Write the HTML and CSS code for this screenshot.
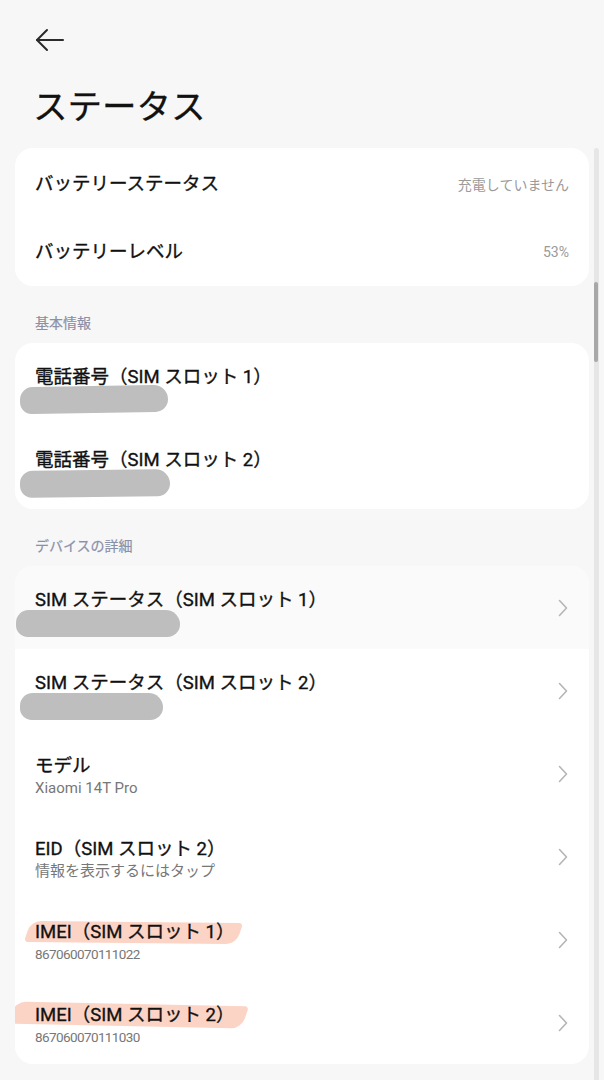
FILE: index.html
```html
<!DOCTYPE html>
<html lang="ja">
<head>
<meta charset="utf-8">
<title>ステータス</title>
<link rel="stylesheet" href="styles.css">
</head>
<body>
<div class="screen">
  <header class="header">
    <div class="back">
      <svg width="30" height="28" viewBox="0 0 30 28" fill="none" stroke="#2b2b2b" stroke-width="2" stroke-linecap="round" stroke-linejoin="round">
        <path d="M2 14 H28"/>
        <path d="M12 4 L2 14 L12 24"/>
      </svg>
    </div>
    <h1 class="title">ステータス</h1>
  </header>

  <section class="card">
    <div class="row row-short">
      <span class="row-title">バッテリーステータス</span>
      <span class="row-value">充電していません</span>
    </div>
    <div class="row row-short">
      <span class="row-title">バッテリーレベル</span>
      <span class="row-value">53%</span>
    </div>
  </section>

  <div class="section-label">基本情報</div>
  <section class="card">
    <div class="row">
      <div class="row-text">
        <div class="row-title">電話番号（SIM スロット 1）</div>
        <div class="blob blob-a"></div>
      </div>
    </div>
    <div class="row">
      <div class="row-text">
        <div class="row-title">電話番号（SIM スロット 2）</div>
        <div class="blob blob-b"></div>
      </div>
    </div>
  </section>

  <div class="section-label">デバイスの詳細</div>
  <section class="card">
    <div class="row row-pressed">
      <div class="row-text">
        <div class="row-title">SIM ステータス（SIM スロット 1）</div>
        <div class="blob blob-c"></div>
      </div>
      <span class="chev"><svg width="10" height="18" viewBox="0 0 10 18" fill="none" stroke="#b5b5b5" stroke-width="1.6" stroke-linecap="round" stroke-linejoin="round"><path d="M1.5 1.5 L8.5 9 L1.5 16.5"/></svg></span>
    </div>
    <div class="row">
      <div class="row-text">
        <div class="row-title">SIM ステータス（SIM スロット 2）</div>
        <div class="blob blob-d"></div>
      </div>
      <span class="chev"><svg width="10" height="18" viewBox="0 0 10 18" fill="none" stroke="#b5b5b5" stroke-width="1.6" stroke-linecap="round" stroke-linejoin="round"><path d="M1.5 1.5 L8.5 9 L1.5 16.5"/></svg></span>
    </div>
    <div class="row">
      <div class="row-text">
        <div class="row-title">モデル</div>
        <div class="row-sub">Xiaomi 14T Pro</div>
      </div>
      <span class="chev"><svg width="10" height="18" viewBox="0 0 10 18" fill="none" stroke="#b5b5b5" stroke-width="1.6" stroke-linecap="round" stroke-linejoin="round"><path d="M1.5 1.5 L8.5 9 L1.5 16.5"/></svg></span>
    </div>
    <div class="row">
      <div class="row-text">
        <div class="row-title">EID（SIM スロット 2）</div>
        <div class="row-sub">情報を表示するにはタップ</div>
      </div>
      <span class="chev"><svg width="10" height="18" viewBox="0 0 10 18" fill="none" stroke="#b5b5b5" stroke-width="1.6" stroke-linecap="round" stroke-linejoin="round"><path d="M1.5 1.5 L8.5 9 L1.5 16.5"/></svg></span>
    </div>
    <div class="row">
      <div class="row-text">
        <div class="row-title"><span class="marked mark-a">IMEI（SIM スロット 1）</span></div>
        <div class="row-sub num">867060070111022</div>
      </div>
      <span class="chev"><svg width="10" height="18" viewBox="0 0 10 18" fill="none" stroke="#b5b5b5" stroke-width="1.6" stroke-linecap="round" stroke-linejoin="round"><path d="M1.5 1.5 L8.5 9 L1.5 16.5"/></svg></span>
    </div>
    <div class="row">
      <div class="row-text">
        <div class="row-title"><span class="marked mark-b">IMEI（SIM スロット 2）</span></div>
        <div class="row-sub num">867060070111030</div>
      </div>
      <span class="chev"><svg width="10" height="18" viewBox="0 0 10 18" fill="none" stroke="#b5b5b5" stroke-width="1.6" stroke-linecap="round" stroke-linejoin="round"><path d="M1.5 1.5 L8.5 9 L1.5 16.5"/></svg></span>
    </div>
  </section>

  <div class="scrollbar"><div class="thumb"></div></div>
</div>
</body>
</html>
```

FILE: styles.css
```css
* { box-sizing: border-box; }
html, body { margin: 0; padding: 0; }
body {
  background: #f7f7f7;
  font-family: Roboto, "Noto Sans CJK JP", sans-serif;
  color: #111;
}
.screen {
  position: relative;
  width: 604px;
  height: 1080px;
  overflow: hidden;
  padding: 0 15px;
}
.header { padding: 26px 0 0 20px; }
.back { height: 28px; display: flex; align-items: center; }
.back svg { display: block; }
.title {
  margin: 33px 0 21px -2px;
  font-size: 34.5px;
  line-height: 40px;
  font-weight: 400;
  color: #111;
  -webkit-text-stroke: 0.3px #111;
}
.card {
  background: #fff;
  border-radius: 18px;
  overflow: hidden;
}
.row {
  height: 83px;
  padding: 22px 20px 0 20px;
  display: flex;
  align-items: flex-start;
  justify-content: space-between;
}
.row-short {
  height: 69px;
  padding-top: 0;
  align-items: center;
}
.row-short:first-child { padding-top: 3px; }
.row-pressed { background: #fafafa; }
.row-text { display: flex; flex-direction: column; }
.row-title {
  font-size: 18.5px;
  line-height: 24px;
  font-weight: 400;
  color: #111;
  -webkit-text-stroke: 0.35px #111;
}
.row-value {
  font-size: 14px;
  color: #9a9a9a;
}
.row-sub {
  font-size: 15px;
  line-height: 21px;
  color: #777;
}
.row-sub.num { font-size: 13.5px; letter-spacing: -0.6px; }
.chev {
  align-self: center;
  margin-top: -22px;
  margin-right: 1px;
  display: flex;
}
.section-label {
  padding: 27px 0 10px 20px;
  font-size: 14px;
  line-height: 20px;
  font-weight: 400;
  color: #8b90a8;
  -webkit-text-stroke: 0.2px #8b90a8;
}
.blob {
  height: 27px;
  background: #bebebe;
  border-radius: 14px 16px 14px 13px;
  margin-top: -3px;
}
.blob-a { width: 148px; margin-left: -15px; transform: rotate(-1deg); }
.blob-b { width: 150px; margin-left: -15px; margin-top: -2px; transform: rotate(-0.6deg); }
.blob-c { width: 164px; margin-left: -19px; margin-top: -2px; }
.blob-d { width: 143px; margin-left: -15px; margin-top: -2px; }
.marked { position: relative; z-index: 1; }
.marked::before {
  content: "";
  position: absolute;
  z-index: -1;
  background: #fcd4c6;
  border-radius: 10px 4px 10px 4px;
}
.mark-a::before { left: -8px; right: -6px; top: 1px; bottom: 0; transform: skewX(-18deg) rotate(0.6deg); }
.mark-b::before { left: -24px; right: -12px; top: 0; bottom: 0; transform: skewX(-18deg) rotate(1.2deg); }
.scrollbar {
  position: absolute;
  top: 148px;
  right: 5px;
  width: 5px;
  height: 940px;
  background: #e6e6e6;
  border-radius: 3px;
}
.thumb {
  position: absolute;
  top: 134px;
  left: 0;
  width: 4px;
  height: 80px;
  background: #a8a8a8;
  border-radius: 2px;
}
```
